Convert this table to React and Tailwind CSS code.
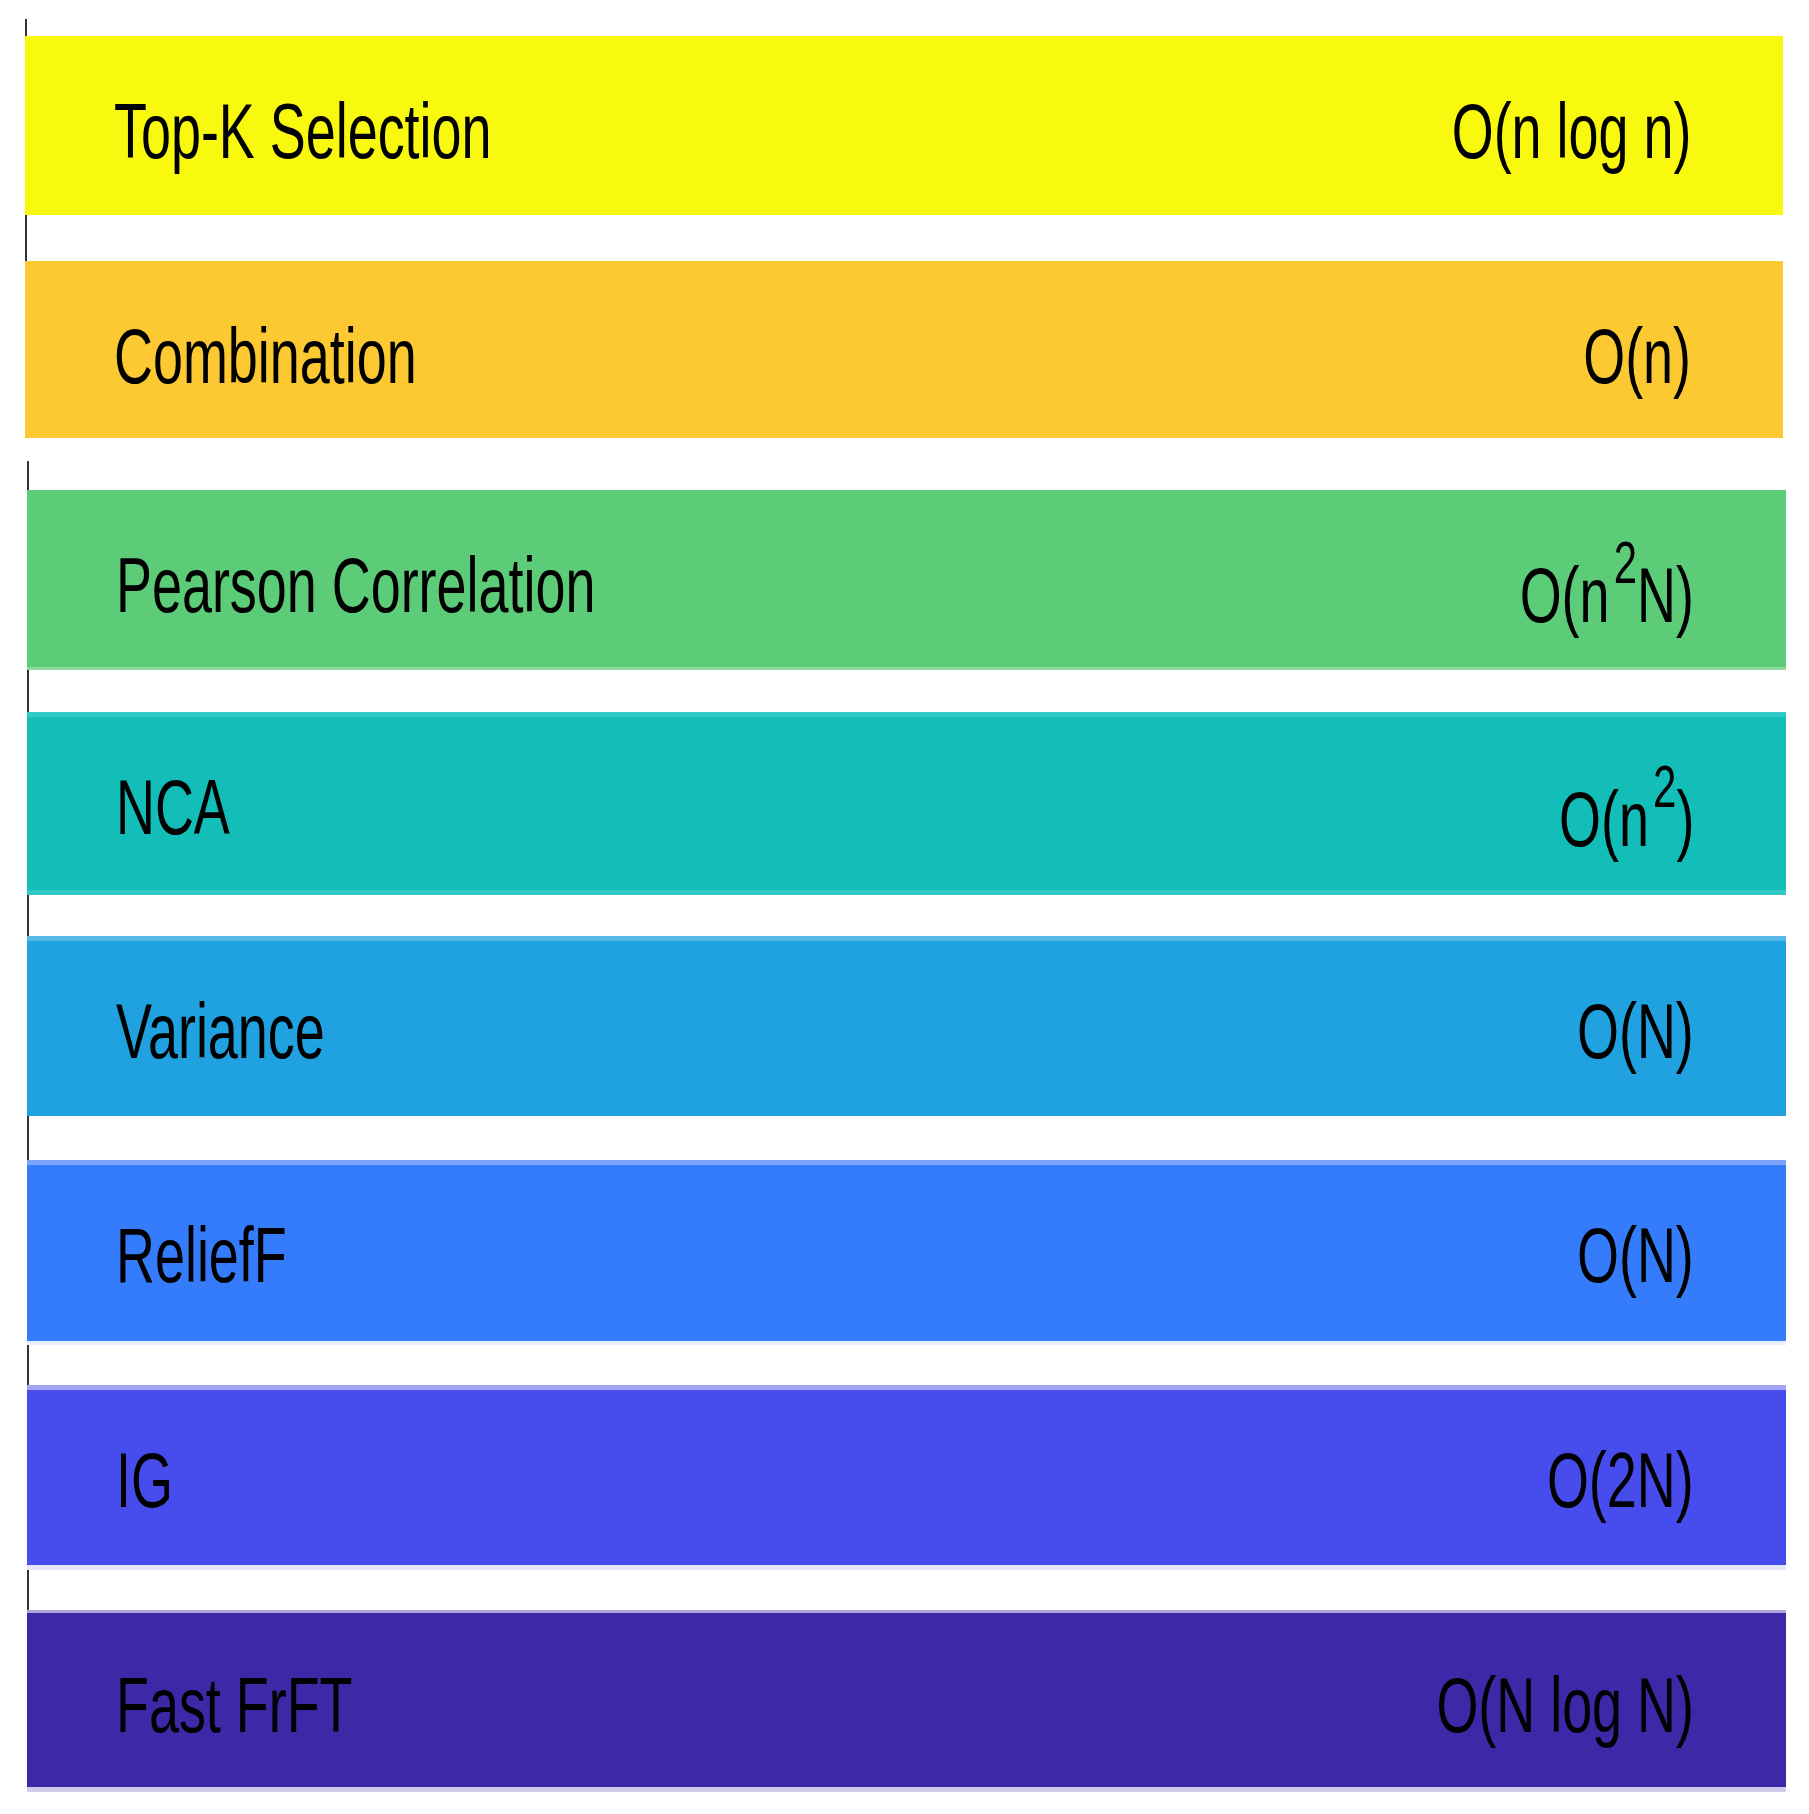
const FONT = "font-['Liberation_Sans',Arial,Helvetica,sans-serif]";

const Sup = ({ children }) => (
  <span className="ml-[6px] text-[60px] leading-[0] align-[39px]">{children}</span>
);

const groupA = [
  {
    label: "Top-K Selection",
    value: "O(n log n)",
    cls: "h-[179px] w-[1758px] bg-[#f9f90f]",
    valueCls: "",
  },
  {
    label: "Combination",
    value: "O(n)",
    cls: "mt-[46px] h-[177px] w-[1758px] bg-[#fcc932]",
    valueCls: "",
  },
];

const groupB = [
  {
    label: "Pearson Correlation",
    value: (
      <>
        O(n<Sup>2</Sup>N)
      </>
    ),
    cls: "h-[180px] w-[1759px] bg-[#5ccc78] shadow-[inset_0_-3px_0_#8edb9f]",
    valueCls: "mt-[10px]",
  },
  {
    label: "NCA",
    value: (
      <>
        O(n<Sup>2</Sup>)
      </>
    ),
    cls: "mt-[42px] h-[183px] w-[1759px] bg-[#13bdb8] shadow-[inset_0_5px_0_#30c9c4,inset_0_-5px_0_#30c9c4]",
    valueCls: "mt-[12px]",
  },
  {
    label: "Variance",
    value: "O(N)",
    cls: "mt-[41px] h-[180px] w-[1759px] bg-[#21a2e0] shadow-[inset_0_5px_0_#57b8ea]",
    valueCls: "",
  },
  {
    label: "ReliefF",
    value: "O(N)",
    cls: "mt-[44px] h-[185px] w-[1759px] bg-[#347cfb] shadow-[inset_0_5px_0_#7ba6fc,inset_0_-4px_0_#e6efff]",
    valueCls: "",
  },
  {
    label: "IG",
    value: "O(2N)",
    cls: "mt-[40px] h-[185px] w-[1759px] bg-[#474ced] shadow-[inset_0_5px_0_#a2a5f5,inset_0_-5px_0_#e5e6fc]",
    valueCls: "",
  },
  {
    label: "Fast FrFT",
    value: "O(N log N)",
    cls: "mt-[40px] h-[182px] w-[1759px] bg-[#3d28a8] shadow-[inset_0_3px_0_#aca3d6,inset_0_-5px_0_#d0cbea]",
    valueCls: "",
  },
];

function Bar({ row }) {
  return (
    <div
      className={`-ml-[2px] flex items-start justify-between pt-[57px] pl-[89px] pr-[92px] ${row.cls}`}
    >
      <span className="block origin-left scale-x-70 whitespace-nowrap text-[77px] leading-none text-black">
        {row.label}
      </span>
      <span
        className={`block origin-right scale-x-70 whitespace-nowrap text-[77px] leading-none text-black ${row.valueCls}`}
      >
        {row.value}
      </span>
    </div>
  );
}

export default function App() {
  return (
    <div className={`w-[1809px] h-[1814px] bg-white pt-[19px] overflow-hidden ${FONT}`}>
      <div className="ml-[25px] border-l-2 border-[#333333] pt-[17px]">
        {groupA.map((r, i) => (
          <Bar key={i} row={r} />
        ))}
      </div>
      <div className="mt-[23px] ml-[27px] border-l-2 border-[#333333] pt-[29px]">
        {groupB.map((r, i) => (
          <Bar key={i} row={r} />
        ))}
      </div>
    </div>
  );
}
